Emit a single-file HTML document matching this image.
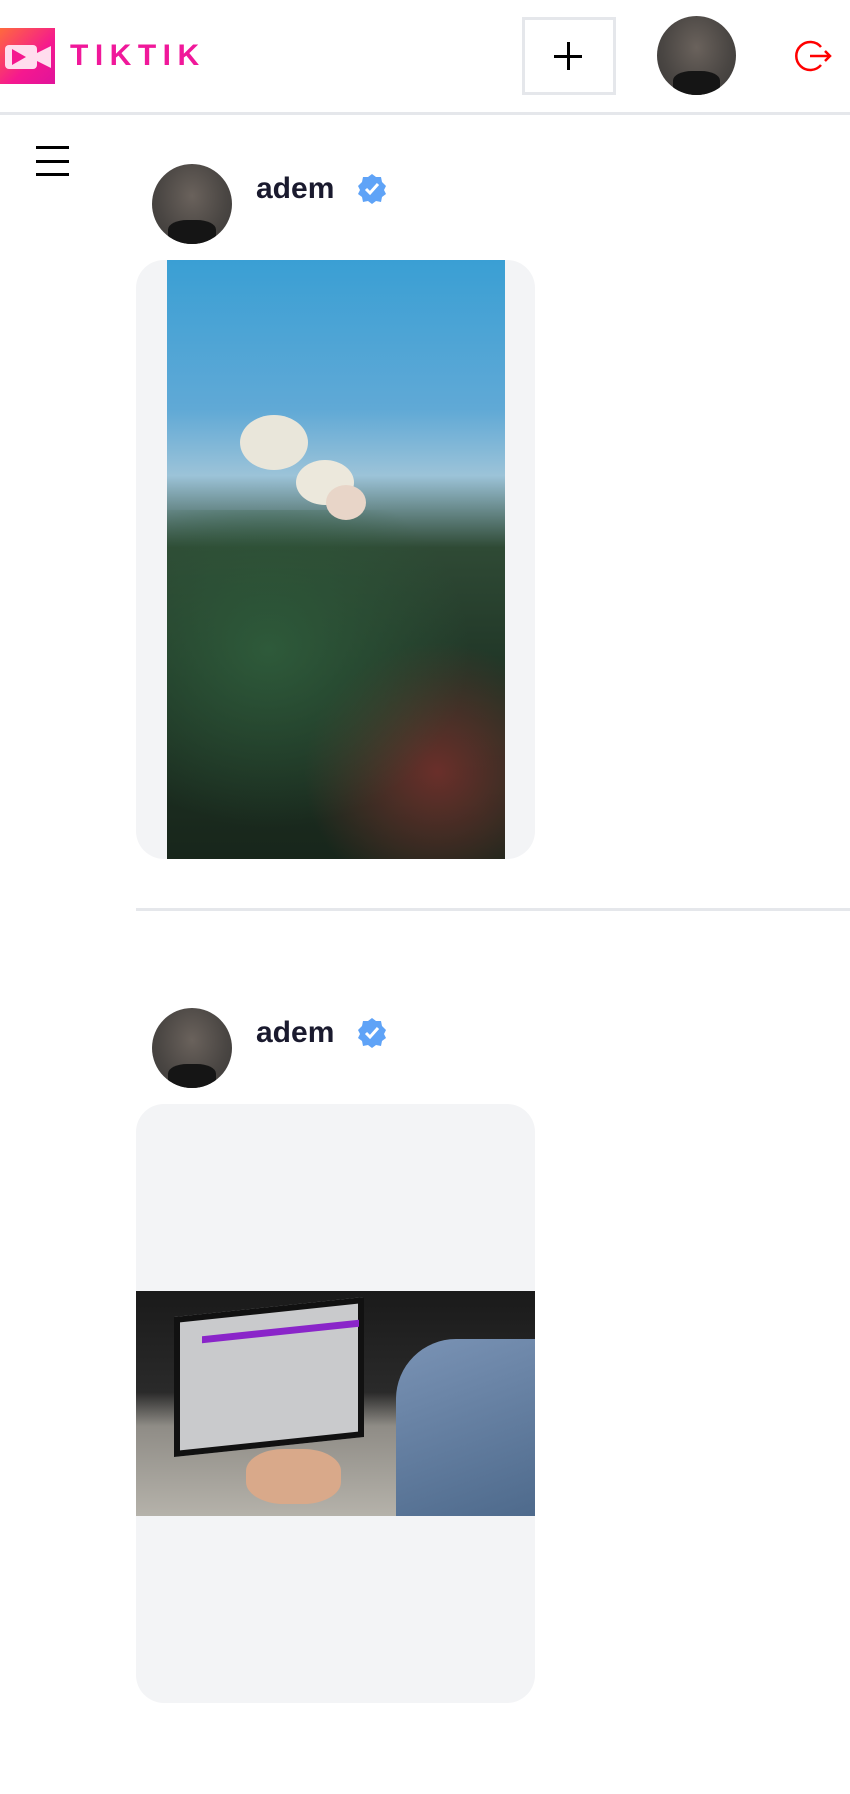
<!DOCTYPE html>
<html><head><meta charset="utf-8"><style>
*{margin:0;padding:0;box-sizing:border-box}
body{width:850px;height:1794px;background:#fff;position:relative;overflow:hidden;font-family:"Liberation Sans",sans-serif}
.abs{position:absolute}
.av{position:absolute;border-radius:50%;overflow:hidden;background:radial-gradient(ellipse at 50% 40%,#6a625c 0%,#4a4643 60%,#3a3837 100%)}
.av::after{content:"";position:absolute;left:20%;right:20%;bottom:0;height:30%;background:#151515;border-radius:40% 40% 0 0}
.name{position:absolute;font-weight:bold;font-size:30px;color:#1a1a2e}
.card{position:absolute;left:136px;width:399px;height:599px;background:#f3f4f6;border-radius:28px;overflow:hidden}
</style></head><body>
<div class="abs" style="left:0;top:28px;width:55px;height:56px;background:linear-gradient(135deg,#ff6a3d,#f5188f 60%,#e0139b)"></div>
<svg class="abs" style="left:4px;top:44px" width="48" height="26" viewBox="0 0 48 26"><rect x="1" y="1" width="32" height="24" rx="4" fill="#fde"/><path d="M33 9 L47 2 V24 L33 17Z" fill="#fde"/><path d="M8 5 L22 13 L8 21Z" fill="#f5188f"/></svg>
<div class="abs" style="left:70px;top:39px;font-size:30px;font-weight:bold;letter-spacing:6.5px;color:#f0189a">TIKTIK</div>
<div class="abs" style="left:522px;top:17px;width:94px;height:78px;border:3px solid #e5e7eb"></div>
<div class="abs" style="left:554px;top:55px;width:28px;height:2.5px;background:#000"></div>
<div class="abs" style="left:567px;top:42px;width:2.5px;height:28px;background:#000"></div>
<div class="av" style="left:657px;top:16px;width:79px;height:79px"></div>
<svg class="abs" style="left:794px;top:36px" width="40" height="40" viewBox="0 0 40 40"><path d="M27 11 A14 14 0 1 0 27 29" fill="none" stroke="#f00" stroke-width="2.5"/><path d="M16 20 H36 M31 15 L36 20 L31 25" fill="none" stroke="#f00" stroke-width="2.5"/></svg>
<div class="abs" style="left:0;top:112px;width:850px;height:3px;background:#e5e7eb"></div>
<div class="abs" style="left:36px;top:146px;width:33px;height:2.5px;background:#000"></div>
<div class="abs" style="left:36px;top:160px;width:33px;height:2.5px;background:#000"></div>
<div class="abs" style="left:36px;top:173px;width:33px;height:2.5px;background:#000"></div>

<div class="av" style="left:152px;top:164px;width:80px;height:80px"></div>
<div class="name" style="left:256px;top:172px">adem</div>
<svg class="abs" style="left:356px;top:173px" width="32" height="32" viewBox="0 0 32 32"><path d="M16 1 L20 4 L25 4 L26 9 L30 13 L28 17 L30 21 L26 24 L25 29 L20 28 L16 31 L12 28 L7 29 L6 24 L2 21 L4 17 L2 13 L6 9 L7 4 L12 4Z" fill="#5fa3f7"/><path d="M10 16 L14 20 L22 11" fill="none" stroke="#fff" stroke-width="3"/></svg>
<div class="card" style="top:260px">
 <div class="abs" style="left:31px;top:0;width:338px;height:599px;background:linear-gradient(180deg,#3a9fd4 0%,#60a9d6 25%,#9cc3d8 36%,#2f4a35 48%,#1f3526 70%,#18261b 100%)"></div>
 <div class="abs" style="left:31px;top:250px;width:338px;height:349px;background:radial-gradient(ellipse at 30% 40%,#2e5a3a,transparent 60%),radial-gradient(ellipse at 80% 75%,#6a2f2a,transparent 35%)"></div>
 <div class="abs" style="left:104px;top:155px;width:68px;height:55px;border-radius:50%;background:#e9e6da"></div>
 <div class="abs" style="left:160px;top:200px;width:58px;height:45px;border-radius:50%;background:#ece8dc"></div>
 <div class="abs" style="left:190px;top:225px;width:40px;height:35px;border-radius:50%;background:#e8d5c8"></div>
</div>
<div class="abs" style="left:136px;top:908px;width:714px;height:3px;background:#e5e7eb"></div>

<div class="av" style="left:152px;top:1008px;width:80px;height:80px"></div>
<div class="name" style="left:256px;top:1016px">adem</div>
<svg class="abs" style="left:356px;top:1017px" width="32" height="32" viewBox="0 0 32 32"><path d="M16 1 L20 4 L25 4 L26 9 L30 13 L28 17 L30 21 L26 24 L25 29 L20 28 L16 31 L12 28 L7 29 L6 24 L2 21 L4 17 L2 13 L6 9 L7 4 L12 4Z" fill="#5fa3f7"/><path d="M10 16 L14 20 L22 11" fill="none" stroke="#fff" stroke-width="3"/></svg>
<div class="card" style="top:1104px">
 <div class="abs" style="left:0;top:187px;width:399px;height:225px;background:linear-gradient(180deg,#1a1a1a 0%,#2a2a2a 45%,#8f8c86 60%,#b5b2aa 100%)"></div>
 <div class="abs" style="left:38px;top:203px;width:190px;height:140px;background:#c9cacc;transform:skewY(-6deg);border:6px solid #111"></div>
 <div class="abs" style="left:66px;top:224px;width:157px;height:7px;background:#8a25c9;transform:skewY(-6deg)"></div>
 <div class="abs" style="left:260px;top:235px;width:139px;height:177px;background:linear-gradient(160deg,#7a93b5,#4e6a8c);border-radius:60px 0 0 0"></div>
 <div class="abs" style="left:110px;top:345px;width:95px;height:55px;border-radius:40%;background:#d9a98a"></div>
</div>
</body></html>
